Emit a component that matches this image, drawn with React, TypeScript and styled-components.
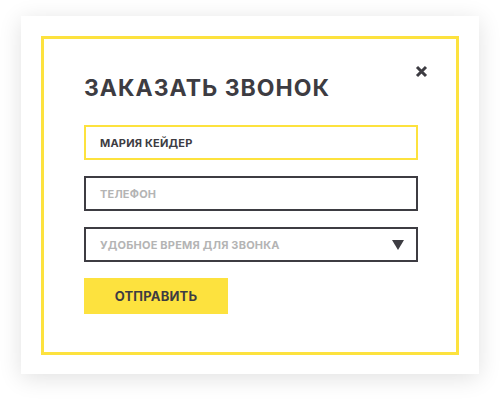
import styled, { createGlobalStyle } from "styled-components"

const GlobalStyle = createGlobalStyle`
  html, body {
    margin: 0;
    padding: 0;
    background: #ffffff;
  }
  body {
    font-family: "Inter", "Noto Sans", sans-serif;
  }
  * { box-sizing: border-box; }
`

const Page = styled.div`
  width: 500px;
  height: 401px;
  padding: 16px 21px 27px 21px;
`

const Card = styled.div`
  background: #fff;
  width: 458px;
  height: 358px;
  padding: 20px;
  box-shadow: 0 4px 22px rgba(0, 0, 0, 0.12);
`

const Frame = styled.div`
  position: relative;
  height: 319px;
  border: 3px solid #fde23e;
  padding: 34px 40px 0 40px;
  display: flex;
  flex-direction: column;
`

const Title = styled.h2`
  margin: 0;
  font-size: 23px;
  line-height: 30px;
  font-weight: 700;
  color: #3d3c42;
  letter-spacing: 1px;
`

const Close = styled.button`
  position: absolute;
  top: 26px;
  right: 28px;
  width: 13px;
  height: 13px;
  padding: 0;
  border: 0;
  background: none;
  cursor: pointer;
  display: flex;
`

const Form = styled.form`
  margin-top: 22px;
  display: flex;
  flex-direction: column;
  gap: 16px;
`

const Field = styled.div<{ $active?: boolean }>`
  width: 334px;
  height: 35px;
  border: 2px solid ${(p) => (p.$active ? "#fde23e" : "#3d3c42")};
  display: flex;
  align-items: center;
  justify-content: space-between;
  padding: 0 12px 0 14px;
  font-size: 11px;
  font-weight: 700;
  letter-spacing: 0.2px;
  color: ${(p) => (p.$active ? "#3d3c42" : "#b4b4b4")};
  text-transform: uppercase;
`

const Arrow = styled.span`
  width: 0;
  height: 0;
  border-left: 6px solid transparent;
  border-right: 6px solid transparent;
  border-top: 10px solid #3d3c42;
`

const Submit = styled.button`
  width: 144px;
  height: 36px;
  border: 0;
  background: #fde23e;
  color: #3d3c42;
  font-family: inherit;
  font-size: 13px;
  font-weight: 700;
  letter-spacing: 0.2px;
  cursor: pointer;
`

export default function App() {
  return (
    <>
      <GlobalStyle />
      <Page>
        <Card>
          <Frame>
            <Close aria-label="Закрыть">
              <svg width="13" height="13" viewBox="0 0 13 13">
                <path d="M2 2 L11 11 M11 2 L2 11" stroke="#3d3c42" strokeWidth="3" />
              </svg>
            </Close>
            <Title>ЗАКАЗАТЬ ЗВОНОК</Title>
            <Form>
              <Field $active>Мария Кейдер</Field>
              <Field>Телефон</Field>
              <Field>
                Удобное время для звонка
                <Arrow />
              </Field>
              <Submit type="button">ОТПРАВИТЬ</Submit>
            </Form>
          </Frame>
        </Card>
      </Page>
    </>
  )
}
